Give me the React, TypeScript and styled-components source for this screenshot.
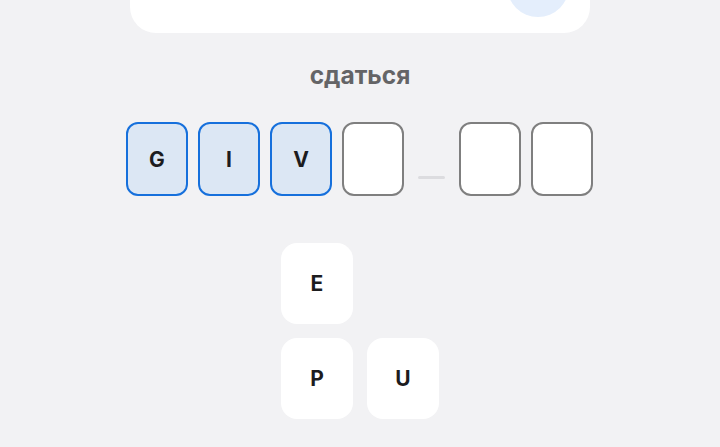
import React from "react";
import styled, { createGlobalStyle } from "styled-components";

const Global = createGlobalStyle`
  html, body { margin: 0; padding: 0; background: #f2f2f4; }
  body { font-family: Inter, "Noto Sans", sans-serif; }
  * { box-sizing: border-box; }
`;

const Page = styled.div`
  display: flex;
  flex-direction: column;
  align-items: center;
  min-height: 447px;
  overflow: hidden;
`;

const Card = styled.div`
  position: relative;
  width: 460px;
  height: 120px;
  margin-top: -87px;
  background: #ffffff;
  border-radius: 26px;
`;

const Bubble = styled.div`
  position: absolute;
  right: 21px;
  top: 42px;
  width: 62px;
  height: 62px;
  border-radius: 50%;
  background: #e4eefc;
`;

const Title = styled.div`
  margin-top: 27px;
  font-size: 24.5px;
  line-height: 30px;
  font-weight: 700;
  color: #646466;
`;

const Row = styled.div`
  display: flex;
  align-items: center;
  gap: 10px;
  margin-top: 32px;
  margin-left: -1px;
`;

const Tile = styled.div<{ $filled?: boolean }>`
  width: 62px;
  height: 74px;
  border-radius: 12px;
  border: 2.5px solid ${(p) => (p.$filled ? "#1670dc" : "#7f7f7f")};
  background: ${(p) => (p.$filled ? "#dce7f4" : "#ffffff")};
  display: flex;
  align-items: center;
  justify-content: center;
  font-size: 21px;
  font-weight: 700;
  color: #1c1c1e;
`;

const Dash = styled.div`
  align-self: flex-end;
  width: 27px;
  height: 3px;
  border-radius: 2px;
  background: #dcdcdf;
  margin: 0 4px 17px;
`;

const Keys = styled.div`
  display: grid;
  grid-template-columns: repeat(2, 72px);
  gap: 14px;
  margin-top: 47px;
`;

const Key = styled.div<{ $hidden?: boolean }>`
  width: 72px;
  height: 81px;
  border-radius: 16px;
  background: #ffffff;
  visibility: ${(p) => (p.$hidden ? "hidden" : "visible")};
  display: flex;
  align-items: center;
  justify-content: center;
  font-size: 21px;
  font-weight: 700;
  color: #1c1c1e;
`;

export default function App() {
  const slots = ["G", "I", "V", "", null, "", ""];
  const keys: (string | null)[] = ["E", null, "P", "U"];
  return (
    <>
      <Global />
      <Page>
        <Card>
          <Bubble />
        </Card>
        <Title>сдаться</Title>
        <Row>
          {slots.map((s, i) =>
            s === null ? (
              <Dash key={i} />
            ) : (
              <Tile key={i} $filled={s !== ""}>
                {s}
              </Tile>
            )
          )}
        </Row>
        <Keys>
          {keys.map((k, i) => (
            <Key key={i} $hidden={k === null}>
              {k}
            </Key>
          ))}
        </Keys>
      </Page>
    </>
  );
}
